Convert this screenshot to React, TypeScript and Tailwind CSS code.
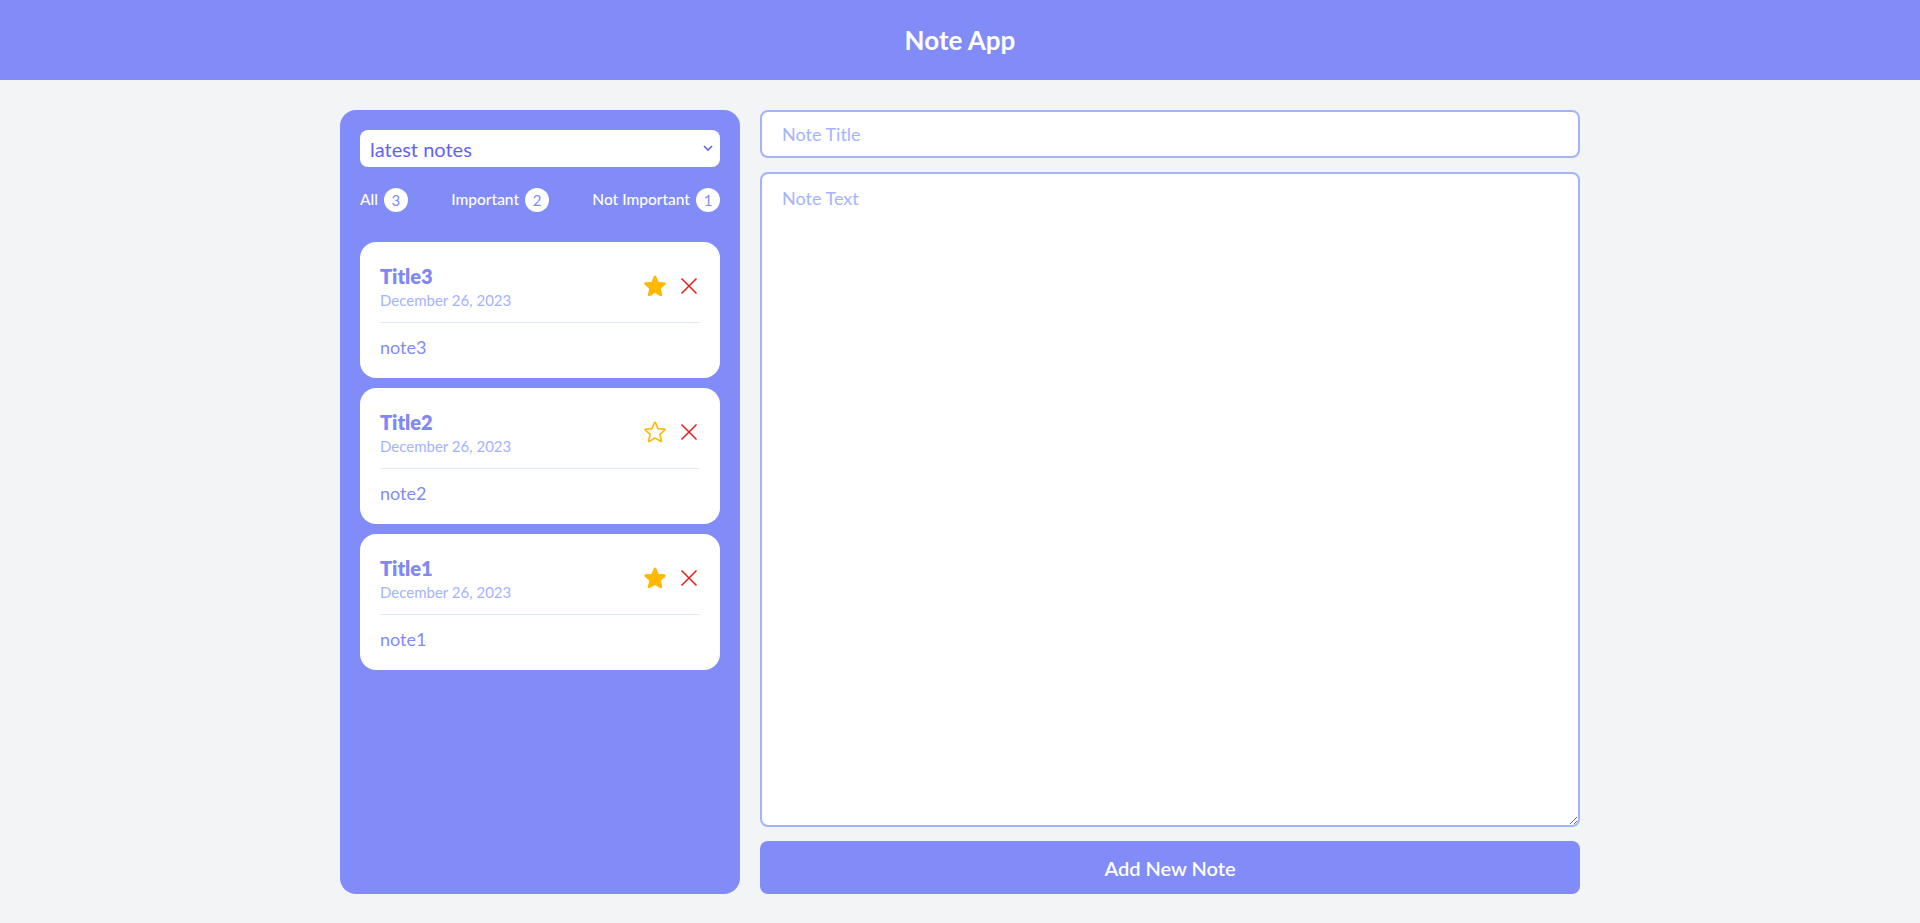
import { useState } from "react";
import { HiStar, HiOutlineStar } from "react-icons/hi2";

type Note = {
  id: number;
  title: string;
  text: string;
  date: string;
  important: boolean;
};

const initialNotes: Note[] = [
  { id: 3, title: "Title3", text: "note3", date: "December 26, 2023", important: true },
  { id: 2, title: "Title2", text: "note2", date: "December 26, 2023", important: false },
  { id: 1, title: "Title1", text: "note1", date: "December 26, 2023", important: true },
];

const CloseIcon = () => (
  <svg width="18" height="18" viewBox="0 0 18 18" fill="none" stroke="#dc2626" strokeWidth="1.6">
    <line x1="1.5" y1="1.5" x2="16.5" y2="16.5" />
    <line x1="16.5" y1="1.5" x2="1.5" y2="16.5" />
  </svg>
);

const FilterItem = ({ label, count }: { label: string; count: number }) => (
  <div className="flex items-center gap-[6px]">
    <span className="text-[15.5px] font-medium text-white">{label}</span>
    <span className="w-6 h-6 rounded-full bg-white text-[#818cf8] text-[15px] flex items-center justify-center">
      {count}
    </span>
  </div>
);

const NoteCard = ({ note }: { note: Note }) => (
  <div className="bg-white rounded-2xl px-5 pt-5 pb-[17px]">
    <div className="flex items-center justify-between pb-3 border-b border-indigo-100">
      <div>
        <h3 className="text-xl leading-7 font-extrabold text-[#7f88f5]">{note.title}</h3>
        <p className="text-[15px] leading-5 text-indigo-300">{note.date}</p>
      </div>
      <div className="flex items-center gap-[12px] mr-[2px]">
        {note.important ? (
          <HiStar size={26} className="text-amber-400" />
        ) : (
          <HiOutlineStar size={26} className="text-amber-400" />
        )}
        <CloseIcon />
      </div>
    </div>
    <p className="mt-[10px] text-lg leading-7 text-[#818cf8]">{note.text}</p>
  </div>
);

export default function App() {
  const [notes] = useState<Note[]>(initialNotes);
  const [sort, setSort] = useState("latest");
  const important = notes.filter((n) => n.important).length;

  return (
    <div className="min-h-screen bg-gray-100" style={{ fontFamily: "Lato, 'Open Sans', sans-serif" }}>
      <header className="h-20 bg-[#818cf8] flex items-center justify-center">
        <h1 className="text-[26px] font-bold text-white">Note App</h1>
      </header>

      <div className="flex justify-center gap-5 pt-[30px]">
        {/* sidebar */}
        <aside className="w-[400px] h-[784px] bg-[#818cf8] rounded-2xl p-5">
          <div className="relative">
            <select
              value={sort}
              onChange={(e) => setSort(e.target.value)}
              className="w-full h-[37px] appearance-none bg-white rounded-lg px-[10px] text-xl text-indigo-500 outline-none"
            >
              <option value="latest">latest notes</option>
              <option value="earliest">earliest notes</option>
            </select>
            <svg
              className="absolute right-[7px] top-[15px]"
              width="10"
              height="7"
              viewBox="0 0 10 7"
              fill="none"
              stroke="#6366f1"
              strokeWidth="1.6"
            >
              <polyline points="1,1 5,5 9,1" />
            </svg>
          </div>

          <div className="flex items-center justify-between mt-[21px]">
            <FilterItem label="All" count={notes.length} />
            <FilterItem label="Important" count={important} />
            <FilterItem label="Not Important" count={notes.length - important} />
          </div>

          <div className="flex flex-col gap-[10px] mt-[30px]">
            {notes.map((note) => (
              <NoteCard key={note.id} note={note} />
            ))}
          </div>
        </aside>

        {/* form */}
        <div className="w-[820px] h-[784px] flex flex-col gap-[14px]">
          <input
            type="text"
            placeholder="Note Title"
            className="h-12 bg-white border-2 border-indigo-300 rounded-lg px-5 text-lg text-indigo-500 placeholder:text-indigo-300 outline-none"
          />
          <textarea
            placeholder="Note Text"
            className="flex-1 bg-white border-2 border-indigo-300 rounded-lg px-5 py-[10px] text-lg text-indigo-500 placeholder:text-indigo-300 outline-none"
          />
          <button className="h-[53px] bg-[#818cf8] rounded-lg text-white text-xl font-semibold">
            Add New Note
          </button>
        </div>
      </div>
    </div>
  );
}
